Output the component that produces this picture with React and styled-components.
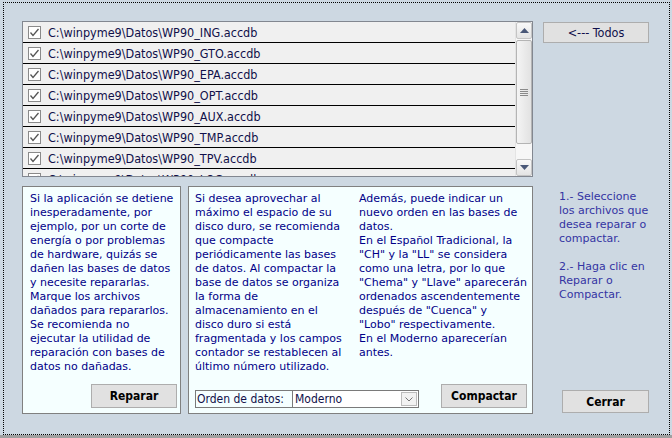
import styled, { createGlobalStyle } from "styled-components";

const GlobalStyle = createGlobalStyle`
  html, body {
    margin: 0;
    padding: 0;
    background: #cdd8e2;
  }
  * {
    box-sizing: border-box;
  }
`;

const Window = styled.div`
  width: 672px;
  height: 438px;
  padding: 2px 2px 0 3px;
  background: #cdd8e2;
  border-bottom: 3px solid #a0a0a0;
  font-family: "DejaVu Sans Condensed", "DejaVu Sans", sans-serif;
`;

const Frame = styled.div`
  height: 100%;
  border: 1px dotted #000;
  display: grid;
  grid-template-columns: 511px 106px;
  grid-template-rows: 156px 228px;
  column-gap: 10px;
  row-gap: 9px;
  padding: 18px 0 0 18px;
`;

const ListBox = styled.div`
  display: flex;
  border: 1px solid #828790;
  background: #f0f0f0;
  overflow: hidden;
`;

const Rows = styled.div`
  flex: 1;
  display: flex;
  flex-direction: column;
`;

const Row = styled.div`
  flex: none;
  height: 21px;
  display: flex;
  align-items: center;
  gap: 7px;
  padding-left: 5px;
  border-bottom: 1px solid #000;
  font-size: 12.5px;
  color: #10104a;
  white-space: nowrap;
`;

const Check = styled.span`
  display: inline-flex;
  width: 13px;
  height: 13px;
  border: 1px solid #8a8a8a;
  background: #fff;
  align-items: center;
  justify-content: center;
`;

const ScrollBar = styled.div`
  width: 17px;
  display: flex;
  flex-direction: column;
  background: #f7f7f7;
  border-left: 1px solid #e4e4e4;
`;

const ArrowBtn = styled.div`
  height: 17px;
  display: flex;
  align-items: center;
  justify-content: center;
  border: 1px solid #c4c4c4;
  border-radius: 2px;
  background: linear-gradient(#f9f9f9, #e4e4e4);
`;

const Thumb = styled.div`
  height: 104px;
  margin-top: 1px;
  display: flex;
  align-items: center;
  justify-content: center;
  border: 1px solid #b4b4b4;
  border-radius: 2px;
  background: linear-gradient(90deg, #f4f4f4, #e2e2e2);
`;

const Track = styled.div`
  flex: 1;
`;

const Button = styled.button`
  width: ${(p) => p.$w}px;
  height: ${(p) => p.$h}px;
  padding: 0;
  border: 1px solid #adadad;
  background: #e1e1e1;
  font-family: inherit;
  font-size: 12px;
  font-weight: ${(p) => (p.$bold ? "bold" : "normal")};
  color: #000;
`;

const TopButton = styled(Button)`
  margin-top: 1px;
  font-size: 12.5px;
  color: #10104a;
`;

const BottomRow = styled.div`
  display: flex;
  gap: 7px;
`;

const Panel = styled.div`
  width: ${(p) => p.$w}px;
  border: 1px solid #808080;
  background: #f5ffff;
  display: flex;
  flex-direction: column;
  padding: 5px ${(p) => p.$pr}px 5px ${(p) => p.$pl}px;
`;

const Text = styled.div`
  font-family: "DejaVu Sans", sans-serif;
  font-size: 11px;
  line-height: 14px;
  color: #000088;
  white-space: pre;
`;

const Columns = styled.div`
  display: grid;
  grid-template-columns: 164px 1fr;
  flex: 1;
`;

const Actions = styled.div`
  display: flex;
  justify-content: space-between;
  align-items: flex-end;
  margin-top: auto;
`;

const Combo = styled.div`
  display: flex;
  height: 18px;
  border: 1px solid #7a7a7a;
  font-size: 12px;
  color: #10104a;
`;

const ComboLabel = styled.div`
  width: 97px;
  padding-left: 1px;
  display: flex;
  align-items: center;
  border-right: 1px solid #7a7a7a;
`;

const ComboValue = styled.div`
  width: 125px;
  display: flex;
  align-items: center;
  justify-content: space-between;
  padding: 0 1px 0 2px;
  background: #fff;
`;

const DropBtn = styled.div`
  width: 16px;
  height: 14px;
  border: 1px solid #bcbcbc;
  background: #f2f2f2;
  display: flex;
  align-items: center;
  justify-content: center;
`;

const Side = styled.div`
  display: flex;
  flex-direction: column;
  justify-content: space-between;
  align-items: flex-start;
  padding: 4px 0 1px 16px;
`;

const Help = styled(Text)`
  color: #3434a2;
`;

const SideButton = styled(Button)`
  align-self: flex-end;
`;

const files = ["ING", "GTO", "EPA", "OPT", "AUX", "TMP", "TPV", "LOG"];

const reparar = `Si la aplicación se detiene
inesperadamente, por
ejemplo, por un corte de
energía o por problemas
de hardware, quizás se
dañen las bases de datos
y necesite repararlas.
Marque los archivos
dañados para repararlos.
Se recomienda no
ejecutar la utilidad de
reparación con bases de
datos no dañadas.`;

const compactar = `Si desea aprovechar al
máximo el espacio de su
disco duro, se recomienda
que compacte
periódicamente las bases
de datos. Al compactar la
base de datos se organiza
la forma de
almacenamiento en el
disco duro si está
fragmentada y los campos
contador se restablecen al
último número utilizado.`;

const orden = `Además, puede indicar un
nuevo orden en las bases de
datos.
En el Español Tradicional, la
"CH" y la "LL" se considera
como una letra, por lo que
"Chema" y "Llave" aparecerán
ordenados ascendentemente
después de "Cuenca" y
"Lobo" respectivamente.
En el Moderno aparecerían
antes.`;

const ayuda = `1.- Seleccione
los archivos que
desea reparar o
compactar.

2.- Haga clic en
Reparar o
Compactar.`;

const CheckMark = () => (
  <Check>
    <svg width="11" height="11" viewBox="0 0 11 11">
      <path d="M1.5 5.5 L4 8.5 L9.5 2" fill="none" stroke="#555" strokeWidth="1.3" />
    </svg>
  </Check>
);

const App = () => {
  return (
    <Window>
      <GlobalStyle />
      <Frame>
        <ListBox>
          <Rows>
            {files.map((f) => (
              <Row key={f}>
                <CheckMark />
                <span>{`C:\\winpyme9\\Datos\\WP90_${f}.accdb`}</span>
              </Row>
            ))}
          </Rows>
          <ScrollBar>
            <ArrowBtn>
              <svg width="9" height="5" viewBox="0 0 9 5">
                <path d="M0 5 L4.5 0 L9 5 Z" fill="#4a5878" />
              </svg>
            </ArrowBtn>
            <Thumb>
              <svg width="8" height="7" viewBox="0 0 8 7">
                <path d="M0 0.5 H8 M0 2.5 H8 M0 4.5 H8 M0 6.5 H8" stroke="#8a8a8a" />
              </svg>
            </Thumb>
            <Track />
            <ArrowBtn>
              <svg width="9" height="5" viewBox="0 0 9 5">
                <path d="M0 0 L9 0 L4.5 5 Z" fill="#4a5878" />
              </svg>
            </ArrowBtn>
          </ScrollBar>
        </ListBox>

        <TopButton $w={106} $h={21}>
          &lt;--- Todos
        </TopButton>

        <BottomRow>
          <Panel $w={159} $pl={7} $pr={3}>
            <Text>{reparar}</Text>
            <Actions>
              <span />
              <Button $w={86} $h={24} $bold>
                Reparar
              </Button>
            </Actions>
          </Panel>
          <Panel $w={345} $pl={6} $pr={5}>
            <Columns>
              <Text>{compactar}</Text>
              <Text>{orden}</Text>
            </Columns>
            <Actions>
              <Combo>
                <ComboLabel>Orden de datos:</ComboLabel>
                <ComboValue>
                  Moderno
                  <DropBtn>
                    <svg width="8" height="5" viewBox="0 0 8 5">
                      <path d="M0.5 0.5 L4 4 L7.5 0.5" fill="none" stroke="#777" />
                    </svg>
                  </DropBtn>
                </ComboValue>
              </Combo>
              <Button $w={86} $h={24} $bold>
                Compactar
              </Button>
            </Actions>
          </Panel>
        </BottomRow>

        <Side>
          <Help>{ayuda}</Help>
          <SideButton $w={87} $h={23} $bold>
            Cerrar
          </SideButton>
        </Side>
      </Frame>
    </Window>
  );
};

export default App;
